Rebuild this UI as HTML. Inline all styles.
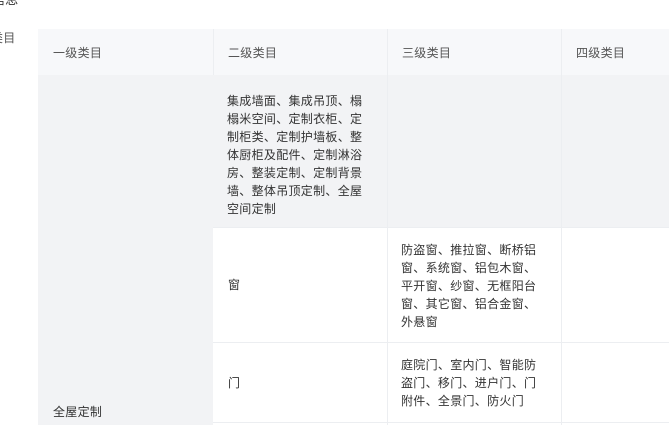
<!DOCTYPE html>
<html><head><meta charset="utf-8"><style>
*{margin:0;padding:0;box-sizing:border-box}
body{width:669px;height:426px;overflow:hidden;background:#fff;position:relative;font-family:"Liberation Sans","Noto Sans CJK SC",sans-serif;font-size:12px;color:#333}
.a{position:absolute}
.t{position:absolute;line-height:18px;font-size:12px;color:#333;white-space:nowrap;letter-spacing:0.3px}
.h{color:#555}
</style></head><body>
<div class="t" style="left:-8px;top:-9px;font-size:13px">信息</div>
<div class="t h" style="left:-9px;top:29px">类目</div>
<div class="a" style="left:38px;top:29px;width:631px;height:46px;background:#f7f8fa"></div>
<div class="a" style="left:213px;top:29px;width:1px;height:46px;background:#eceef1"></div>
<div class="a" style="left:387px;top:29px;width:1px;height:46px;background:#eceef1"></div>
<div class="a" style="left:561px;top:29px;width:1px;height:46px;background:#eceef1"></div>
<div class="t h" style="left:53px;top:44px">一级类目</div>
<div class="t h" style="left:228px;top:44px">二级类目</div>
<div class="t h" style="left:402px;top:44px">三级类目</div>
<div class="t h" style="left:576px;top:44px">四级类目</div>
<div class="a" style="left:38px;top:75px;width:175px;height:350px;background:#f2f3f5"></div>
<div class="t" style="left:53px;top:403px">全屋定制</div>
<div class="a" style="left:213px;top:75px;width:456px;height:152px;background:#f2f3f5"></div>
<div class="a" style="left:387px;top:75px;width:1px;height:350px;background:#eceef1"></div>
<div class="a" style="left:561px;top:75px;width:1px;height:350px;background:#eceef1"></div>
<div class="t" style="left:227px;top:92px">集成墙面、集成吊顶、榻<br>榻米空间、定制衣柜、定<br>制柜类、定制护墙板、整<br>体厨柜及配件、定制淋浴<br>房、整装定制、定制背景<br>墙、整体吊顶定制、全屋<br>空间定制</div>
<div class="a" style="left:213px;top:227px;width:456px;height:1px;background:#eceef1"></div>
<div class="t" style="left:228px;top:276px">窗</div>
<div class="t" style="left:401px;top:241px">防盗窗、推拉窗、断桥铝<br>窗、系统窗、铝包木窗、<br>平开窗、纱窗、无框阳台<br>窗、其它窗、铝合金窗、<br>外悬窗</div>
<div class="a" style="left:213px;top:342px;width:456px;height:1px;background:#eceef1"></div>
<div class="t" style="left:228px;top:374px">门</div>
<div class="t" style="left:401px;top:356px">庭院门、室内门、智能防<br>盗门、移门、进户门、门<br>附件、全景门、防火门</div>
<div class="a" style="left:213px;top:422px;width:456px;height:1px;background:#eceef1"></div>
</body></html>
